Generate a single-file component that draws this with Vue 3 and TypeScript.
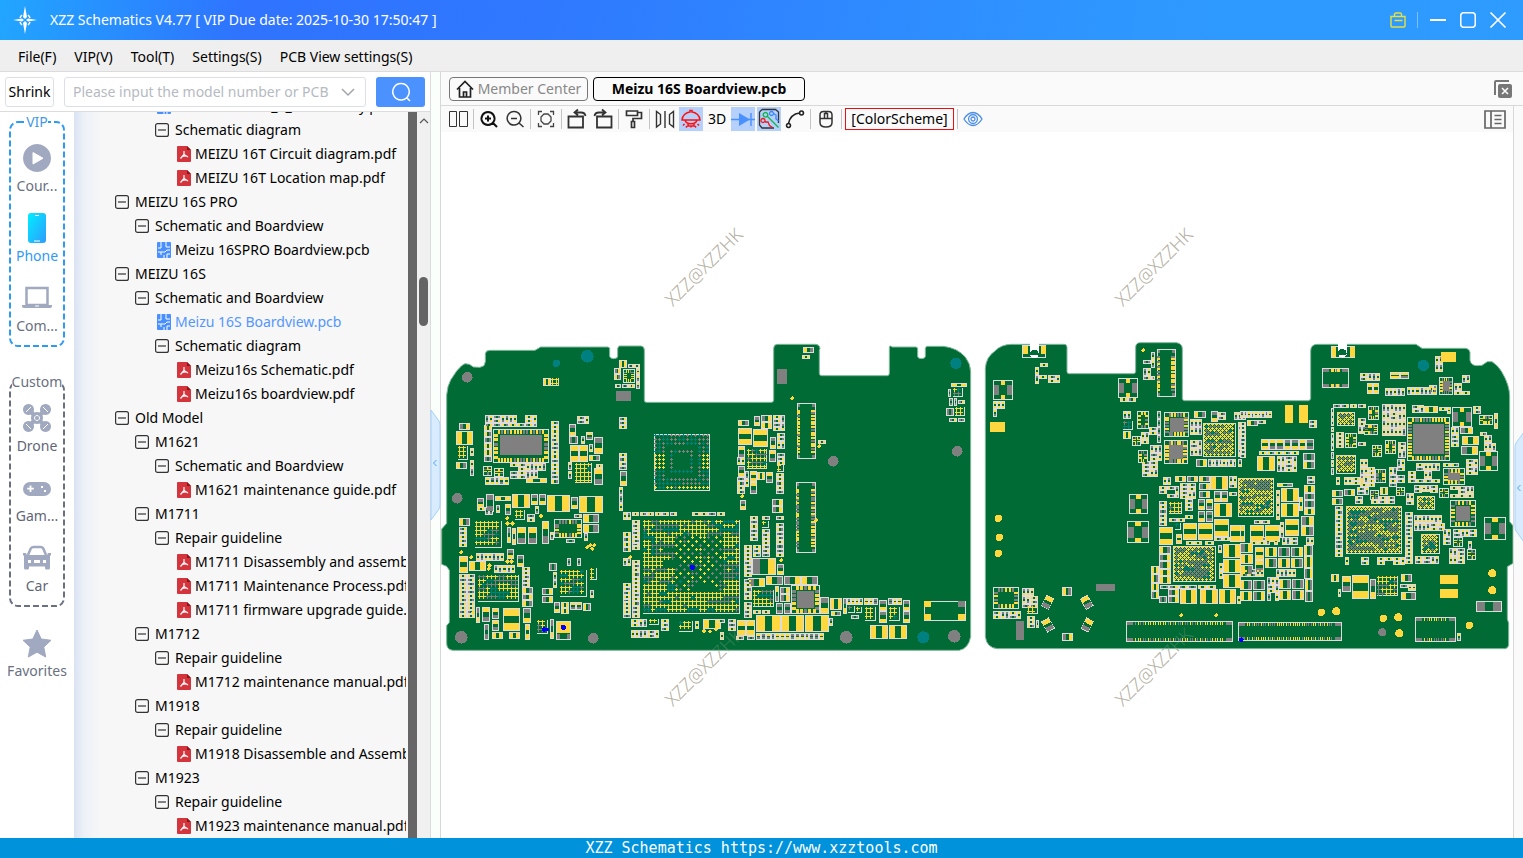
<script setup lang="ts">
import { ref } from 'vue'

interface Stroke { d: string; s?: string; f?: string; w?: number }
interface TreeRow { level: number; kind: 'folder' | 'pdf' | 'pcb'; label: string; active?: boolean }
interface RailItem { icon: string; label: string; active?: boolean }

const query = ref('')
const menus = ['File(F)', 'VIP(V)', 'Tool(T)', 'Settings(S)', 'PCB View settings(S)']

const vipItems: RailItem[] = [
  { icon: 'course', label: 'Cour...' },
  { icon: 'phone', label: 'Phone', active: true },
  { icon: 'computer', label: 'Com...' },
]
const customItems: RailItem[] = [
  { icon: 'drone', label: 'Drone' },
  { icon: 'game', label: 'Gam...' },
  { icon: 'car', label: 'Car' },
]

const G = '#a0a9bf'
const W = '#ffffff'
const railIcons: Record<string, Stroke[]> = {
  course: [
    { d: 'M14 0a14 14 0 1 0 .01 0z', f: G },
    { d: 'M10 8.500v11.500l10-5.750z', f: W, s: W, w: 1 },
  ],
  phone: [
    { d: 'M8-1h12q3 0 3 3v24q0 3-3 3h-12q-3 0-3-3v-24q0-3 3-3z', f: 'url(#phoneFill)' },
    { d: 'M12 1.500h4M11 27h6', s: W, w: 1 },
  ],
  computer: [
    { d: 'M3.500 4h21v17h-21z', s: G, w: 2.5 },
    { d: 'M-1 21h30v1q0 2-2 2h-26q-2 0-2-2z', f: G },
    { d: 'M12 22h4', s: W, w: 1 },
  ],
  drone: [
    { d: 'M6 6l16 16M22 6l-16 16', s: G, w: 4 },
    { d: 'M14 8a6 6 0 1 0 .01 0z', f: G },
    { d: 'M5.500 0a5.500 5.500 0 1 0 .01 0zM22.500 0a5.500 5.500 0 1 0 .01 0zM5.500 17a5.500 5.500 0 1 0 .01 0zM22.500 17a5.500 5.500 0 1 0 .01 0z', f: G },
    { d: 'M3 8l5-5M25 8l-5-5M3 20l5 5M25 20l-5 5', s: W, w: 1 },
    { d: 'M14 11.500a2.500 2.500 0 1 0 .01 0z', s: W, w: 1 },
  ],
  game: [
    { d: 'M7 8h14a7 7 0 0 1 0 14h-14a7 7 0 0 1 0-14z', f: G },
    { d: 'M7.500 11.500v6.500M4.200 14.700h6.600', s: W, w: 1.8 },
    { d: 'M18 12h2v2h-2zM21 16h2v2h-2z', f: W },
  ],
  car: [
    { d: 'M5 11l2.500-6q.8-2 3-2h7q2.200 0 3 2l2.500 6', s: G, w: 2.5 },
    { d: 'M0 9h3l1 2h20l1-2h3v2l-1 1v12q0 1.500-1.500 1.500h-2q-1.500 0-1.500-1.500v-1.500h-16v1.500q0 1.500-1.500 1.500h-2q-1.500 0-1.500-1.500v-12l-1-1z', f: G },
    { d: 'M5 16h3v3h-3zM20 16h3v3h-3zM11 16h6v3h-6z', f: W },
  ],
  star: [
    { d: 'M14 0l4.200 9 9.800 1.300-7.200 6.800 1.900 9.900-8.700-4.800-8.700 4.800 1.900-9.900-7.200-6.800 9.800-1.300z', f: G, s: G, w: 1 },
  ],
}

const K = '#333333'
interface Tool { kind: 'icon' | 'sep' | 'text' | 'scheme'; name?: string; label?: string; on?: boolean; art?: Stroke[] }
const sep: Tool = { kind: 'sep' }
const tools: Tool[] = [
  { kind: 'icon', name: 'Split view', art: [{ d: 'M3.500 4.500h7v15h-7zM13.500 4.500h8v15h-8z', s: K, w: 1 }] },
  sep,
  { kind: 'icon', name: 'Zoom in', art: [{ d: 'M11 5a6.500 6.500 0 1 0 .01 0zM16 16l4 4M11 8.500v6M8 11.500h6', s: '#111', w: 2 }] },
  { kind: 'icon', name: 'Zoom out', art: [{ d: 'M11 4.500a6.800 6.800 0 1 0 .01 0zM16 16l4.500 4M8 11.500h6', s: K, w: 1.5 }] },
  sep,
  { kind: 'icon', name: 'Fit', art: [{ d: 'M4.500 8v-3.500h3.500M16 4.500h3.500v3.500M19.500 16v3.500h-3.500M8 19.500h-3.500v-3.500M10 7h4l3 3v4l-3 3h-4l-3-3v-4z', s: '#444', w: 1.3 }] },
  sep,
  { kind: 'icon', name: 'Rotate left', art: [{ d: 'M3.500 9.500h14.500v11h-14.500zM10 5.500h6q4 0 4.500 3.500M13 2.500l-3.500 3 3.500 2.800', s: K, w: 1.8 }] },
  { kind: 'icon', name: 'Rotate right', art: [{ d: 'M6 9.500h14.500v11h-14.500zM3.500 9q.5-3.500 4.500-3.500h6M11 2.500l3.500 3-3.500 2.800', s: K, w: 1.8 }] },
  sep,
  { kind: 'icon', name: 'Paint', art: [{ d: 'M4.500 4h11v4.500h-11zM15.500 5.500h4v6h-8.500v3M9.500 14.500h3v6h-3z', s: K, w: 1.7 }] },
  sep,
  { kind: 'icon', name: 'Mirror', art: [{ d: 'M3.500 4.500v15.500l4-3v-9.500zM20.500 4.500v15.500l-4-3v-9.500zM12 4v17', s: K, w: 1.4 }] },
  { kind: 'icon', name: 'Light', on: true, art: [{ d: 'M3 13q0-3 2.500-5.500 2.500-2.300 5.500-2.500v-1.500h2v1.500q3 .2 5.500 2.500 2.500 2.500 2.500 5.500zM6 13q1 3.800 6 3.800t6-3.800M9 17v2h6v-2M5.500 17l-1.500 1.500M18.500 17l1.500 1.500M8 19l-1 1.500M16 19l1 1.500M12 19v1.500', s: '#ff1010', w: 1.5 }] },
  { kind: 'text', label: '3D' },
  { kind: 'icon', name: 'Diode', on: true, art: [{ d: 'M8 6l11 6.500-11 6.500z', f: '#4a90ff' }, { d: 'M0 12.500h24M20 6v13', s: '#4a90ff', w: 1.4 }] },
  { kind: 'icon', name: 'Traces', on: true, art: [
    { d: 'M5 2.500h13.500l3 2.500v11M2.500 5v13l2.500 3h12M2.500 5l2.500-2.500', s: K, w: 1.3 },
    { d: 'M8.500 5.500a2.300 2.300 0 1 0 .01 0zM10.500 9.500l11 11', s: '#13b54a', w: 1.4 },
    { d: 'M6 11.500a2 2 0 1 0 .01 0zM8 15h3l1.500 3.500 3 2', s: '#f01818', w: 1.3 },
    { d: 'M14.500 4.500a2 2 0 1 0 .01 0zM16.500 6.500l2.500 1.500v4l2.500 2', s: '#3b86ff', w: 1.3 },
  ] },
  { kind: 'icon', name: 'Curve', art: [{ d: 'M18.500 4a2 2 0 1 0 .01 0zM16.500 6q-9 1-11 10.500M5.500 16.500a2 2 0 1 0 .01 0z', s: '#222', w: 1.6 }] },
  sep,
  { kind: 'icon', name: 'Mouse', art: [{ d: 'M9.500 4.500h5q3.500 0 3.500 3.500v7.500q0 4.500-6 4.500t-6-4.500v-7.500q0-3.500 3.500-3.500zM6 11.500h12M12 4.500v2M10.500 6.500h3v5h-3z', s: K, w: 1.5 }] },
  sep,
  { kind: 'scheme', label: '[ColorScheme]' },
  sep,
  { kind: 'icon', name: 'Visibility', art: [{ d: 'M3 12q4-6.500 9-6.500t9 6.500q-4 6.500-9 6.500t-9-6.500zM12 7.500a4.500 4.500 0 1 0 .01 0zM12 10a2 2 0 1 0 .01 0z', s: '#4a8ee6', w: 1.3 }] },
]

const tree: TreeRow[] = [
  { level: 2, kind: 'pcb', label: 'MEIZU 16T MB_1_2 Assembly.pcb' },
  { level: 2, kind: 'folder', label: 'Schematic diagram' },
  { level: 3, kind: 'pdf', label: 'MEIZU 16T Circuit diagram.pdf' },
  { level: 3, kind: 'pdf', label: 'MEIZU 16T Location map.pdf' },
  { level: 0, kind: 'folder', label: 'MEIZU 16S PRO' },
  { level: 1, kind: 'folder', label: 'Schematic and Boardview' },
  { level: 2, kind: 'pcb', label: 'Meizu 16SPRO Boardview.pcb' },
  { level: 0, kind: 'folder', label: 'MEIZU 16S' },
  { level: 1, kind: 'folder', label: 'Schematic and Boardview' },
  { level: 2, kind: 'pcb', label: 'Meizu 16S Boardview.pcb', active: true },
  { level: 2, kind: 'folder', label: 'Schematic diagram' },
  { level: 3, kind: 'pdf', label: 'Meizu16s Schematic.pdf' },
  { level: 3, kind: 'pdf', label: 'Meizu16s boardview.pdf' },
  { level: 0, kind: 'folder', label: 'Old Model' },
  { level: 1, kind: 'folder', label: 'M1621' },
  { level: 2, kind: 'folder', label: 'Schematic and Boardview' },
  { level: 3, kind: 'pdf', label: 'M1621 maintenance guide.pdf' },
  { level: 1, kind: 'folder', label: 'M1711' },
  { level: 2, kind: 'folder', label: 'Repair guideline' },
  { level: 3, kind: 'pdf', label: 'M1711 Disassembly and assembly.pdf' },
  { level: 3, kind: 'pdf', label: 'M1711 Maintenance Process.pdf' },
  { level: 3, kind: 'pdf', label: 'M1711 firmware upgrade guide.pdf' },
  { level: 1, kind: 'folder', label: 'M1712' },
  { level: 2, kind: 'folder', label: 'Repair guideline' },
  { level: 3, kind: 'pdf', label: 'M1712 maintenance manual.pdf' },
  { level: 1, kind: 'folder', label: 'M1918' },
  { level: 2, kind: 'folder', label: 'Repair guideline' },
  { level: 3, kind: 'pdf', label: 'M1918 Disassemble and Assemble.pdf' },
  { level: 1, kind: 'folder', label: 'M1923' },
  { level: 2, kind: 'folder', label: 'Repair guideline' },
  { level: 3, kind: 'pdf', label: 'M1923 maintenance manual.pdf' },
]

/*
 * Part lists, one per board section, in board units.
 * c chip, s strip of chips, k packed block, b ball grid, t tight ball grid,
 * q quad package, j side connector, i edge connector, m shielded module,
 * f flat pad, o round pad, p test point, w outline, r tilted chip
 */
const leftWest = `
o 82 127 16 g;o 349 85 11 t;o 442 64 19 t;o 52 490 16 g;o 64 907 19 g;o 460 910 16 g
c 309 129 24 24;b 333 129 24 24;q 549 102 36 42 3 4;c 537 75 24 24;s 563 87 37 12 2;s 522 98 22 36 2;s 588 99 12 63 3;s 525 147 60 12 3
f 528 168 45 30 g;k 135 240 156 36;q 159 282 168 102 15 6;f 180 300 126 60 g;s 333 258 24 188 15;s 132 270 24 110 6
k 210 384 110 48;q 130 393 27 30 2 2;q 163 399 28 27 2 2;s 135 426 72 24 5;c 258 429 63 15 yy
c 57 264 33 21 gy;c 48 288 51 42 yy;b 54 333 30 42;c 90 339 12 24;c 48 381 33 21 yg;s 90 375 12 48 2
k 387 243 80 24;c 387 267 21 36 gy;c 387 303 27 24;c 423 303 12 24;c 438 291 21 24;c 462 306 27 51 gy;c 390 330 27 51 yy;c 417 330 27 51 yy
c 447 327 12 24;c 447 360 33 18 yg;b 405 384 51 60;c 462 399 27 51 yg;s 384 381 12 51 2;c 468 387 21 12
s 537 246 24 36 3;s 537 354 24 51 4;c 540 408 21 45 gy;s 537 456 12 72 3
b 642 297 168 171 x;s 576 531 135 12 6;s 756 531 54 12 2
c 111 489 21 30 gy;c 138 477 24 54 gg;c 165 483 48 15 yy;c 216 477 54 42 yy;c 273 477 21 33 gy;c 297 477 21 33 gy;c 321 480 69 51 yy;c 393 486 21 36 gy;c 417 483 72 51 yy
k 111 516 48 30;c 168 510 12 24;c 195 507 18 33 yg;b 225 525 30 30;k 261 513 36 48
c 57 549 33 24 yg;s 57 576 24 60 5;b 105 558 81 81;c 201 576 12 48;c 216 579 12 51;c 231 576 27 51 yg;c 264 576 27 51 yg;c 306 558 21 69 yg;q 342 552 84 57 6 4
c 429 537 48 27 yg;c 429 567 48 27 yg;c 402 537 24 12;c 378 612 27 12;c 330 591 12 24;c 432 593 12 24
p 64 652;p 94 667;p 148 692;p 202 550;p 202 680;p 202 566;p 217 566;p 214 680;p 442 637;p 451 631;p 457 642;p 463 631;p 303 544;p 146 702;p 100 832;p 571 667
s 108 654 84 24 7;c 57 663 27 51 yy;c 87 678 51 30 yy;c 201 642 21 30;s 162 690 63 24 5;c 231 660 21 36
s 57 717 24 132 11;s 81 717 24 132 11;b 114 720 123 81;s 246 696 24 60 5;s 246 756 33 60 3
c 327 684 24 24;c 381 669 12 24;c 411 669 12 24;b 360 705 81 81;s 339 711 12 48 2;c 306 759 33 21 gy;c 306 783 33 21 gy;b 450 699 22 36;k 450 738 24 24;c 450 765 12 24
c 342 801 18 33 gy;s 363 801 24 36 2;s 390 801 36 24 2;c 429 804 24 24
c 108 816 12 48;c 126 816 24 45 yg;c 156 819 21 33 yg;c 189 819 51 69 yy;c 249 819 24 45 gy;c 156 855 21 33 yg;c 132 867 15 48 gg;c 156 891 33 21 yy;c 207 891 33 21 yy;c 255 867 15 48 yy
b 291 855 33 42;c 330 852 12 60;w 348 858 45 57;f 351 861 39 33 y;f 351 897 9 15 g;f 381 897 9 15 g;o 370 877 8 b;o 312 884 7 b;o 321 884 6 b;o 757 697 8 b
s 549 531 24 24 2;s 576 555 24 90 8;s 549 590 24 60 4;s 549 669 24 24 2;s 576 675 24 174 14;s 549 744 24 105 9;b 609 555 291 282 d
k 573 852 51 24;k 573 885 90 24;b 627 852 30 18;s 663 852 24 36 3;b 717 858 42 33;c 765 858 12 24;c 789 852 54 30 yy;p 792 888;p 810 890;p 828 884`

const leftEast = `
c 309 36 33 18 yg;c 306 60 24 12;f 231 102 30 45 g;p 277 190;j 291 204 57 168 16;j 288 441 60 213 22;c 354 315 24 12;p 358 334
o 400 379 16 g;o 772 349 16 g;o 768 85 17 t;p 127 484;p 349 556;p 244 676;o 439 907 19 g;o 670 907 18 t;o 763 904 19 g
c 114 255 33 18 yg;c 162 243 18 30 gy;c 183 240 33 21 gy;c 183 261 33 21 yy;k 219 240 36 54;c 114 279 42 51 yy;c 159 282 45 54 yy;c 210 306 18 36 gy;k 231 294 24 54;c 114 333 21 36 yg;b 141 342 60 60;c 207 345 21 36 yg;s 231 354 24 36 3
k 111 366 24 24;c 114 393 21 33;s 111 426 24 51 4;s 135 408 12 48 2;c 150 408 21 33 yy;c 150 441 21 36 yg;c 171 411 24 24;c 198 411 21 33 yg;b 231 387 21 24;s 228 414 24 63 5;c 120 495 18 30 gy;c 216 492 33 21 gy;c 216 513 33 21 gy
s 0 531 75 12 3;c 186 543 24 12;c 228 543 24 12;s 150 543 24 75 6;b 186 558 21 21;s 186 582 24 84 7;s 228 564 24 102 8;s 132 630 24 96 8;k 159 630 24 36;c 156 669 72 51 gy;c 231 687 21 33 gy
c 144 729 51 27 gy;c 198 723 51 27 yg;c 252 723 51 27 gy;c 303 723 51 27 yg;s 132 732 24 63 5;b 159 765 63 51;c 225 753 12 48;c 240 756 30 21 gy;c 240 777 30 24 gy;q 273 750 87 87 5 5 c;c 360 786 27 51 gy;s 132 801 24 48 4;c 228 804 21 33 gg;c 252 804 21 33 gg;c 159 825 24 12;c 186 825 24 12
c 168 840 75 51 yy;c 243 840 69 51 yy;c 315 840 72 51 yy;c 111 855 27 48 yy;c 138 855 27 48 yy;c 387 849 12 24;s 168 894 204 21 14;k 60 891 48 24;c 108 903 24 12;c 141 903 24 12;k 84 852 24 36;c 51 852 24 12
c 390 789 36 36 yy;c 393 828 30 14;c 429 789 12 48;s 441 789 48 21 4;b 444 813 20 20;b 467 815 20 18;c 453 840 24 12;s 492 789 42 21 3;b 495 816 33 42;c 537 795 24 33 gy;c 537 828 24 36 gy;s 564 789 42 21 3;b 567 816 33 42;c 609 795 21 33 gy;c 609 828 21 36 gy;c 510 870 54 42 yy;c 567 870 54 42 yy
w 672 798 126 60;f 672 798 21 18 y;f 774 798 21 18 g;f 672 837 21 18 y;f 774 837 21 18 y
c 753 144 48 12 yy;c 744 162 9 24;b 759 160 30 26;c 747 189 12 24;c 762 189 9 24;c 774 195 21 12;c 738 219 24 24;b 765 216 30 27;c 747 249 24 12;c 774 249 21 12`

const rightWest = `
w 126 30 72 39;f 130 33 14 24 y;f 183 33 14 24 y;f 150 24 27 36 w;o 163 57 13 w
m 39 135 60 60;m 414 129 60 60;m 447 477 57 60;m 441 558 66 66
c 165 96 12 24;c 180 84 24 12;c 165 120 12 27;c 177 120 24 12;k 204 120 36 24;k 39 197 36 24;c 39 221 12 24;f 30 261 45 30 y;s 420 187 48 14 2
p 490 46;k 489 50 36 84;j 531 42 57 144 14;o 55 550 11 y;o 58 607 11 y;o 55 655 11 y;f 108 857 24 58 g;f 348 747 57 21 g
q 39 756 78 66 5 4;s 126 759 36 24 3;k 126 783 48 36;b 141 812 33 24;s 141 843 24 36 3;c 168 855 9 24;k 40 827 86 27;c 246 756 30 27 yg;c 246 893 33 24 gy
r 203 802 118;r 320 802 60;r 204 870 60;r 322 870 118
k 429 228 30 24;b 429 258 30 27;c 429 288 24 24;q 471 228 36 54 2 3;k 507 228 39 96;q 552 231 75 75 6 6 c;q 552 315 72 72 6 6 c;q 456 303 27 30 2 2;k 483 291 26 40;q 474 345 30 39 2 2;k 510 330 36 48;k 486 378 54 54
c 642 228 36 21 yg;c 693 228 21 33 gy;k 714 231 96 24;t 669 264 99 102 y;s 774 261 24 105 9;s 684 372 84 24 8;c 648 372 33 24 gy;k 630 252 38 54;k 630 315 38 54;c 774 372 12 24
k 549 425 30 24;c 585 423 33 18 yy;c 621 423 33 18 gy;c 657 423 33 18 yg;c 690 423 54 42 yy;k 747 423 24 66;k 537 453 60 39;k 600 444 50 48;c 657 444 33 21 gy;c 657 468 33 21 gy;c 702 468 21 33 gy;c 723 468 21 33 gy;t 774 429 108 117
s 537 498 24 75 6;b 567 501 39 36;k 615 492 24 66;c 654 492 21 33 gy;c 678 492 21 33 yg;c 654 528 21 33 gy;c 678 528 21 33 gg;c 702 504 54 42 yy;c 537 576 42 54 yy v;c 609 564 42 51 yy v;c 654 564 45 51 yy v;c 702 552 45 54 yy v;c 750 570 45 51 yy v;s 567 549 48 12 2;b 585 564 18 20;c 588 597 18 30;s 618 618 48 12 2;c 675 618 27 12;s 702 606 48 12 2
s 537 633 36 114 5;t 579 633 129 108;s 513 693 24 99 4;c 537 783 24 21;c 729 627 54 42 yy;c 729 672 54 42 yy;c 729 717 54 42 yy;c 714 630 12 24;s 717 684 12 48 2;s 540 750 170 12 6;c 564 762 33 21 gy;c 564 783 33 21 gy;c 600 762 51 45 yy;c 660 762 54 45 yy;c 717 762 51 45 yy;c 771 783 12 24
p 604 841;p 709 841;i 438 858 321 63 36;i 774 861 311 57 38;o 784 914 7 b`

const rightEast = `
w 273 33 72 36;f 275 35 13 30 y;f 331 35 13 30 y;f 294 24 27 36 w;o 307 55 13 w;i 246 99 81 60 8;o 550 91 17 t;f 603 51 45 30 y;s 450 111 57 21 2
k 585 63 24 48;k 567 126 24 48;q 597 126 42 54 4 4 c;k 642 120 50 62;k 360 114 60 28;c 381 144 18 33 yy;c 399 144 18 33 yy;s 435 160 60 24 5;s 500 157 90 24 7
f 135 210 24 54 y;f 177 210 27 54 y;k 207 207 30 72;s 0 228 96 22 9;c 21 255 33 18 yg;c 54 255 24 12;s 0 262 18 106 9;s 63 312 159 33 7;k 57 348 120 18;c 51 363 54 45 yy;k 111 363 66 50;s 189 354 36 48 2
k 201 423 24 24;c 111 444 48 12;s 192 450 33 90 4;c 123 459 54 42 yy;c 123 504 54 42 yy;c 177 486 12 42;s 108 465 12 90 3;s 183 543 39 60 2;c 135 552 42 51 yy v;c 30 570 42 51 yy;c 75 570 45 51 yy;c 0 570 15 51 y;k 42 555 50 12;s 120 560 12 50 2
k 30 606 190 24;k 0 624 42 102 42 33;c 45 636 27 39 yy;c 45 675 27 39 yg;k 75 636 117 66 39 33;s 192 630 27 102 3;k 0 702 70 24;k 84 702 108 24;k 0 735 78 66 39 33;k 81 726 36 75;k 117 732 78 66 39 33;s 195 732 24 69 2
s 273 219 10 130 7;s 279 207 99 12 4;t 291 231 54 42 y;k 288 291 24 50;q 315 294 36 45 3 3;t 288 360 60 57 y;s 273 350 10 72 3;q 384 213 33 42 3 3;q 372 267 42 33 3 3;k 426 207 75 96;k 354 250 24 84;q 396 330 30 36 3 3;q 435 315 33 42 3 3;k 474 320 24 50;k 360 372 45 84;k 446 372 56 84;q 405 402 33 42 3 3
q 501 246 129 132 12 12 c;k 515 210 36 27;c 552 213 42 21 yy;k 598 216 36 21;m 636 216 60 60;m 717 348 57 60;m 732 546 66 69;k 700 213 24 24;q 717 240 42 30 3 2;c 762 234 12 48;c 720 291 21 12;k 732 300 48 48
c 660 276 39 21 gy;c 666 303 51 27 yy;c 663 333 51 27 gy;k 633 276 26 75;k 678 372 36 57;q 609 399 66 51 4 3 c;k 505 384 100 60;s 610 384 48 12 2
c 276 465 33 21 yg;c 276 489 33 21 yg;c 312 462 33 21 gy;k 288 426 82 24;k 346 484 125 24;k 350 456 36 24;c 420 456 24 24;q 390 465 27 30 2 2;q 468 456 27 27 2 2;k 498 474 24 50;t 531 483 54 42 y;k 522 450 76 22;q 597 459 30 30 2 2;q 630 495 78 81 5 5 c;k 630 453 78 36;t 318 513 168 144;s 285 513 24 153 12;s 495 531 24 156 13
k 315 666 180 24;k 522 540 92 56;t 543 597 57 60 y;k 608 582 30 54;k 640 582 70 24;q 640 606 30 30 2 2;q 682 642 26 32 2 2;k 628 640 50 48;k 525 664 100 24;c 684 618 12 24
c 273 717 24 24;c 306 723 27 48 yg;c 336 720 51 72 yy;c 390 732 18 60 gy;b 411 723 63 60;c 483 717 33 24 yg;k 480 747 54 20;c 483 771 45 24 yg;f 600 720 54 27 y;f 600 762 54 27 y
o 757 715 12 y;o 757 766 12 y;o 244 832 11 y;o 289 829 12 y;o 430 850 11 y;o 475 847 12 y;o 478 895 12 y;o 688 871 11 y;o 427 892 12 g;c 708 798 78 33 gg;i 525 846 123 75 10;c 651 894 12 24;c 294 762 9 24`

type Ink = 'line' | 'base' | 'y' | 'g' | 't' | 'b' | 'w'
const inks: [Ink, string][] = [
  ['line', '#dcdcdc'], ['base', '#006b35'], ['g', '#808080'], ['t', '#008080'],
  ['y', '#ffd83f'], ['b', '#0000ff'], ['w', '#ffffff'],
]

function drawSection(source: string) {
  const out: Record<Ink, string> = { line: '', base: '', y: '', g: '', t: '', b: '', w: '' }
  let seed = 11
  const rnd = () => {
    seed = (seed * 16807) % 2147483647
    return seed / 2147483647
  }
  const snap = (v: number) => Math.round(v / 3) * 3
  const rect = (ink: Ink, x: number, y: number, w: number, h: number) => {
    const l = snap(x)
    const t = snap(y)
    const rw = Math.max(3, snap(x + w) - l)
    const rh = Math.max(3, snap(y + h) - t)
    out[ink] += `M${l} ${t}h${rw}v${rh}h${-rw}z`
  }
  const box = (x: number, y: number, w: number, h: number) => {
    const l = snap(x)
    const t = snap(y)
    const r = snap(x + w)
    const b = snap(y + h)
    rect('line', l, t, r - l, b - t)
    if (r - l > 6 && b - t > 6) rect('base', l + 3, t + 3, r - l - 6, b - t - 6)
  }
  const pick = (): Ink => (rnd() < 0.62 ? 'y' : 'g')
  const chip = (x0: number, y0: number, w0: number, h0: number, pads?: string, dir?: string) => {
    const x = snap(x0)
    const y = snap(y0)
    const w = Math.max(9, snap(x0 + w0) - x)
    const h = Math.max(9, snap(y0 + h0) - y)
    const a = (pads ? pads[0] : pick()) as Ink
    const b = (pads ? pads[1] || pads[0] : pick()) as Ink
    box(x, y, w, h)
    if (dir === 'v' || (h > w && dir !== 'h')) {
      const p = Math.max(3, snap((h - 6) * 0.34))
      rect(a, x + 3, y + 3, w - 6, p)
      rect(b, x + 3, y + h - 3 - p, w - 6, p)
    } else {
      const p = Math.max(3, snap((w - 6) * 0.34))
      rect(a, x + 3, y + 3, p, h - 6)
      rect(b, x + w - 3 - p, y + 3, p, h - 6)
    }
  }
  const plus = (ink: Ink, x: number, y: number, arm = 9) => {
    rect(ink, x, y + 3, arm, 3)
    rect(ink, x + 3, y, 3, arm)
  }
  const disc = (ink: Ink, x: number, y: number, r: number) => {
    out[ink] += `M${x - r} ${y}a${r} ${r} 0 1 0 ${2 * r} 0a${r} ${r} 0 1 0 ${-2 * r} 0z`
  }
  const pads = (x: number, y: number, len: number, n: number, size: number, horizontal: boolean) => {
    const step = len / n
    for (let i = 0; i < n; i++) {
      const at = i * step + step * 0.2
      const span = Math.max(3, snap(step * 0.6))
      if (horizontal) rect(pick(), snap(x + at), y, span, size)
      else rect(pick(), x, snap(y + at), size, span)
    }
  }

  for (const item of source.split(/[;\n]/)) {
    if (!item.trim()) continue
    const a = item.trim().split(' ')
    const [x, y, w, h, n, m] = a.slice(1).map(Number)
    switch (a[0]) {
      case 'c':
        chip(x, y, w, h, a[5], a[6])
        break
      case 's':
        for (let i = 0; i < n; i++) {
          if (h > w) {
            if (w > 12) chip(x, y + (i * h) / n, w, h / n, undefined, 'h')
            else chip(x, y + (i * h) / n, w, h / n - 1, undefined, 'v')
          } else if (h > 14) chip(x + (i * w) / n, y, w / n, h, undefined, 'v')
          else chip(x + (i * w) / n, y, w / n - 1, h, undefined, 'h')
        }
        break
      case 'k':
        if (n) {
          for (let v = 0; v + m <= h + 3; v += m) for (let u = 0; u + n <= w + 3; u += n) chip(x + u, y + v, n - 3, m - 3, undefined, 'h')
          break
        }
        for (let v = 0; v + 10 <= h; v += 24) {
          for (let u = 0; u + 10 <= w; u += 24) {
            if (rnd() < 0.1) continue
            const bw = Math.min(24, w - u)
            const bh = Math.min(24, h - v)
            if (bh < 20 || (bw >= 20 && rnd() < 0.5)) {
              chip(x + u, y + v, bw, 12, undefined, 'h')
              if (bh >= 22 && rnd() < 0.85) chip(x + u, y + v + 12, bw, 12, undefined, 'h')
            } else {
              chip(x + u, y + v, 12, bh, undefined, 'v')
              if (bw >= 22 && rnd() < 0.85) chip(x + u + 12, y + v, 12, bh, undefined, 'v')
            }
          }
        }
        break
      case 'b': {
        const sparse = a[5] === 'x'
        const big = a[5] === 'd'
        rect('line', x, y + h - 3, w, 3)
        rect('line', x + w - 3, y, 3, h)
        if (sparse) {
          rect('line', x, y, w, 3)
          rect('line', x, y, 3, h)
        }
        let ink: Ink = 'y'
        for (let v = 0; v + 10 < h; v += 12) {
          for (let u = 0; u + 10 < w; u += 12) {
            const fx = u / w
            const fy = v / h
            let inner = false
            if (sparse) {
              const ring = Math.max(Math.abs(fx - 0.46), Math.abs(fy - 0.46))
              if ((ring > 0.2 && ring < 0.26) || ring < 0.13) continue
              const side = fy > 0.35 && fy < 0.62 && (fx < 0.2 || fx > 0.8)
              ink = side || (fy > 0.85 && rnd() < 0.6) ? 'y' : rnd() < 0.5 ? 't' : 'g'
            } else if (big) {
              if (fx > 0.2 && fx < 0.36 && ((fy > 0.27 && fy < 0.33) || (fy > 0.42 && fy < 0.5))) continue
              if (fx > 0.5 && fx < 0.72 && fy > 0.68 && fy < 0.76) continue
              inner = fx > 0.3 && fx < 0.82 && fy > 0.14 && fy < 0.74
              if (inner && (u / 12 + v / 12) % 2 && rnd() < 0.8) continue
              if (inner || rnd() < 0.5) {
                const r = rnd()
                const teal = fx > 0.82 && fy < 0.6 ? 0.35 : inner ? 0.02 : 0.14
                ink = r < teal ? 't' : r < teal + (inner ? 0.4 : 0.2) ? 'g' : 'y'
              }
            } else if (rnd() < 0.6) {
              const r = rnd()
              ink = r < 0.56 ? 'y' : r < 0.76 ? 'g' : 't'
            }
            plus(ink, x + u, y + v, sparse || inner ? 9 : 12)
          }
        }
        break
      }
      case 't': {
        box(x, y, w, h)
        const bright = a[5] === 'y'
        let ink: Ink = 'g'
        for (let v = 0, row = 0; v + 10 < h; v += 6, row++) {
          for (let u = row % 2 ? 6 : 0; u + 10 < w; u += 12) {
            const edge = v < 6 || v + 16 > h || u < 6 || u + 16 > w
            if (rnd() < 0.5) {
              const r = rnd()
              ink = r < (bright ? 0.5 : 0.34) ? 'y' : r < 0.84 ? 'g' : 't'
            }
            plus(edge ? 'y' : ink, x + u, y + v)
          }
        }
        break
      }
      case 'q': {
        box(x, y, w, h)
        const d = w > 60 ? 12 : 9
        pads(x + d, y + 3, w - 2 * d, n, d, true)
        pads(x + d, y + h - 3 - d, w - 2 * d, n, d, true)
        pads(x + 3, y + d, h - 2 * d, m, d, false)
        pads(x + w - 3 - d, y + d, h - 2 * d, m, d, false)
        if (a[7] === 'c') {
          const k = w > 100 ? 0.15 : 0.22
          rect('g', x + w * k, y + h * k, w * (1 - 2 * k), h * (1 - 2 * k))
        }
        break
      }
      case 'j':
        box(x, y, w, h)
        rect('g', x + 3, y + 3, 6, 10)
        rect('g', x + w - 11, y + 3, 8, 10)
        rect('g', x + 3, y + h - 13, 6, 10)
        rect('g', x + w - 11, y + h - 13, 8, 10)
        pads(x, y + 18, h - 36, n, 10, false)
        pads(x + w - 14, y + 18, h - 36, n, 12, false)
        break
      case 'i':
        box(x, y, w, h)
        for (const v of [y + 2, y + h - 13]) {
          rect('g', x + 3, v, 18, 11)
          rect('g', x + w - 21, v, 18, 11)
          pads(x + 26, v, w - 52, n, 11, true)
        }
        break
      case 'm':
        box(x, y, w, h)
        rect('g', x + 2, y + h / 4, w * 0.28, h / 2)
        rect('g', x + w * 0.72 - 2, y + h / 4, w * 0.28, h / 2)
        rect('y', x + w * 0.38, y + 2, w * 0.24, h * 0.2)
        rect('y', x + w * 0.38, y + h * 0.8 - 2, w * 0.24, h * 0.2)
        break
      case 'f':
        rect(a[5] as Ink, x, y, w, h)
        break
      case 'o':
        disc(a[4] as Ink, x, y, w)
        break
      case 'p':
        out.y += `M${x - 7} ${y}l7-7 7 7-7 7z`
        break
      case 'w':
        box(x, y, w, h)
        break
      case 'r': {
        const t = (w * Math.PI) / 180
        const quad = (ink: Ink, l: number, r: number, k: number) => {
          const pts = [[l, -k], [r, -k], [r, k], [l, k]].map(([u, v]) => `${Math.round(x + u * Math.cos(t) - v * Math.sin(t))} ${Math.round(y + u * Math.sin(t) + v * Math.cos(t))}`)
          out[ink] += `M${pts.join('L')}z`
        }
        quad('line', -19, 19, 13)
        quad('base', -4, 4, 11)
        quad('y', -17, -4, 11)
        quad('g', 4, 17, 11)
        break
      }
    }
  }
  return inks.map(([ink, color]) => ({ color, d: out[ink] })).filter((layer) => layer.d)
}

const sections = [
  { x: 440, layers: drawSection(leftWest) },
  { x: 700, layers: drawSection(leftEast) },
  { x: 980, layers: drawSection(rightWest) },
  { x: 1240, layers: drawSection(rightEast) },
]

const boards = [
  { x: 440, d: 'M20 180L24 155 32 135 50 108 65 92 75 86 88 88 100 96 120 97 132 92 136 80V56Q138 46 150 46H285L302 36H505L509 40V64Q510 71 521 71Q533 71 533 64V40L537 33H603Q613 34 613 45V196Q613 202 619 202H994Q1001 202 1001 195V40Q1001 28 1013 28H1128Q1139 29 1140 40L1138 46V115Q1138 122 1145 122H1342Q1348 122 1348 115V35L1352 33 1356 36H1427Q1433 36 1433 42V64Q1433 71 1444 71Q1456 71 1456 64V40L1460 34H1510Q1550 38 1576 66Q1592 88 1592 110V905Q1586 940 1558 946H38Q20 944 20 925V872L28 862V706L20 694 5 688V582L20 565z' },
  { x: 980, d: 'M16 100Q18 66 45 48Q64 28 95 28H253Q261 28 261 37V110Q261 116 268 116H460Q467 116 467 109V37Q467 23 481 23H590Q607 26 607 42V190Q607 197 614 197H985Q992 196 992 190V48Q992 28 1012 28H1308L1326 40H1458Q1472 44 1470 60L1470 76Q1474 92 1490 92L1506 91 1522 80H1536Q1553 90 1565 110Q1589 150 1589 185V560L1599 572V685L1582 695V852L1586 865V930Q1584 941 1574 941H52Q20 938 16 905z' },
]
const marks = [[673, 307], [1123, 307], [673, 707], [1123, 707]]
</script>

<template>
  <div class="window">
    <header class="titlebar">
      <svg class="logo" width="24" height="28" viewBox="0 0 24 28" aria-hidden="true">
        <path d="M12 0l2 11-2 2-2-2zM12 28l2-11-2-2-2 2zM0 14l9-1.500 2 1.500-2 1.500zM24 14l-9-1.500-2 1.500 2 1.500z" fill="#fff" />
        <path d="M9 9a6 6 0 0 0-2 3M15 9a6 6 0 0 1 2 3M9 19a6 6 0 0 1-2-3M15 19a6 6 0 0 0 2-3" fill="none" stroke="#fff" stroke-width="1.5" />
      </svg>
      <h1>XZZ Schematics V4.77 [ VIP Due date: 2025-10-30 17:50:47 ]</h1>
      <div class="window-buttons">
        <button class="bag" aria-label="Toolbox">
          <svg width="16" height="16" viewBox="0 0 16 16"><path d="M1 4.500h14v9.500q0 1-1 1h-12q-1 0-1-1zM4.500 4.500v-2q0-1.500 1.500-1.500h4q1.500 0 1.500 1.500v2M4.500 8.500h8" fill="none" stroke="#e6e03c" stroke-width="1.4" /></svg>
        </button>
        <button aria-label="Minimize"><svg width="16" height="16" viewBox="0 0 16 16"><path d="M0 8h16" stroke="#fff" stroke-width="2" /></svg></button>
        <button aria-label="Maximize"><svg width="16" height="16" viewBox="0 0 16 16"><rect x=".75" y=".75" width="14.500" height="14.500" rx="3" fill="none" stroke="#fff" stroke-width="1.500" /></svg></button>
        <button aria-label="Close"><svg width="16" height="16" viewBox="0 0 16 16"><path d="M.5.5l15 15M15.500.5l-15 15" stroke="#fff" stroke-width="1.700" /></svg></button>
      </div>
    </header>

    <nav class="menubar">
      <button v-for="m in menus" :key="m">{{ m }}</button>
    </nav>

    <div class="workspace">
      <aside class="browser">
        <form class="search" @submit.prevent>
          <button type="button" class="shrink">Shrink</button>
          <label class="field">
            <input v-model="query" type="text" aria-label="Model number" placeholder="Please input the model number or PCB" />
            <svg width="14" height="8" viewBox="0 0 14 8" aria-hidden="true"><path d="M1 1l6 6 6-6" fill="none" stroke="#a0a4ac" stroke-width="1.500" /></svg>
          </label>
          <button type="submit" class="go" aria-label="Search">
            <svg width="20" height="20" viewBox="0 0 20 20"><path d="M10 1.500a8.200 8.200 0 1 0 .01 0zM15.500 15.500l3.500 3.500" fill="none" stroke="#fff" stroke-width="1.500" /></svg>
          </button>
        </form>

        <div class="browser-body">
          <div class="rail">
            <svg width="0" height="0" class="defs" aria-hidden="true">
              <defs><linearGradient id="phoneFill" x1="0" y1="0" x2="1" y2="1"><stop offset="0" stop-color="#00eeff" /><stop offset="1" stop-color="#2f9bff" /></linearGradient></defs>
            </svg>
            <section class="group vip">
              <svg class="dash" aria-hidden="true"><rect x="1" y="1" rx="8" /></svg>
              <h2>VIP</h2>
              <button v-for="it in vipItems" :key="it.label" :class="{ active: it.active }">
                <svg width="28" height="28" viewBox="0 0 28 28">
                  <path v-for="(p, i) in railIcons[it.icon]" :key="i" :d="p.d" :fill="p.f || 'none'" :stroke="p.s || 'none'" :stroke-width="p.w" />
                </svg>
                <span>{{ it.label }}</span>
              </button>
            </section>
            <section class="group custom">
              <svg class="dash" aria-hidden="true"><rect x="1" y="1" rx="8" /></svg>
              <h2>Custom</h2>
              <button v-for="it in customItems" :key="it.label">
                <svg width="28" height="28" viewBox="0 0 28 28">
                  <path v-for="(p, i) in railIcons[it.icon]" :key="i" :d="p.d" :fill="p.f || 'none'" :stroke="p.s || 'none'" :stroke-width="p.w" />
                </svg>
                <span>{{ it.label }}</span>
              </button>
            </section>
            <button class="favorites">
              <svg width="28" height="28" viewBox="0 0 28 28"><path v-for="(p, i) in railIcons.star" :key="i" :d="p.d" :fill="p.f" :stroke="p.s" stroke-linejoin="round" /></svg>
              <span>Favorites</span>
            </button>
          </div>

          <div class="tree">
            <ul>
              <li v-for="(row, i) in tree" :key="i">
                <button :class="['l' + row.level, row.kind, { active: row.active }]">
                  <svg v-if="row.kind === 'folder'" width="14" height="14" viewBox="0 0 14 14"><rect x=".6" y=".6" width="12.800" height="12.800" rx="2" fill="none" stroke="#333" stroke-width="1.200" /><path d="M3 7h8" stroke="#333" stroke-width="1.200" /></svg>
                  <svg v-else-if="row.kind === 'pdf'" width="14" height="16" viewBox="0 0 14 16"><path d="M1 0h9l4 4v11q0 1-1 1h-12q-1 0-1-1v-14q0-1 1-1z" fill="#d4353d" /><path d="M10 0l4 4h-4z" fill="#8e1219" /><path d="M7 5v3.500l-3.500 4M7 8.500l4 2.500M5 10.500l4-.5" fill="none" stroke="#fff" stroke-width="1.200" /></svg>
                  <svg v-else width="14" height="16" viewBox="0 0 14 16"><rect width="14" height="16" rx="1" fill="#4a8fff" /><path d="M4 0v6h-3M9 0v5h4M1 10h3v3M4 10h4l2-2h3M7 16v-3M10 16v-4h3" fill="none" stroke="#fff" stroke-width="1" /></svg>
                  <span>{{ row.label }}</span>
                </button>
              </li>
            </ul>
          </div>
          <div class="divider"></div>
          <div class="scroll">
            <svg width="10" height="6" viewBox="0 0 10 6" aria-hidden="true"><path d="M1 5l4-4 4 4" fill="none" stroke="#555" stroke-width="1.200" /></svg>
            <div class="thumb"></div>
          </div>
        </div>
      </aside>

      <div class="gutter">
        <button class="handle left" aria-label="Collapse file list"><svg width="10" height="110" viewBox="0 0 10 110"><path d="M0 0l8 11q1 2 1 5v78q0 3-1 5l-8 11z" fill="#d9ecff" stroke="#a5d2fb" /><path d="M5.500 50l-3 3 3 3" fill="none" stroke="#4ba6f5" /></svg></button>
      </div>

      <main class="viewer">
        <div class="tabs">
          <button class="tab">
            <svg width="18" height="18" viewBox="0 0 18 18" aria-hidden="true"><path d="M1 9.500l8-8 8 8M3.500 8v9h11v-9M7.500 17v-5h3v5" fill="none" stroke="#222" stroke-width="1.700" /></svg>
            <span>Member Center</span>
          </button>
          <button class="tab current">Meizu 16S Boardview.pcb</button>
          <button class="close-all" aria-label="Close all tabs">
            <svg width="18" height="18" viewBox="0 0 18 18"><path d="M1 15v-13q0-1 1-1h13" fill="none" stroke="#777" stroke-width="2" /><rect x="4" y="4" width="14" height="14" rx="2" fill="#777" /><path d="M8 8l6 6M14 8l-6 6" stroke="#fff" stroke-width="1.500" /></svg>
          </button>
        </div>

        <div class="view-row">
          <div class="view-main">
            <div class="toolbar">
              <template v-for="(t, i) in tools" :key="i">
                <i v-if="t.kind === 'sep'" class="sep"></i>
                <button v-else-if="t.kind === 'icon'" :class="{ on: t.on }" :aria-label="t.name">
                  <svg width="24" height="24" viewBox="0 0 24 24"><path v-for="(p, k) in t.art" :key="k" :d="p.d" :fill="p.f || 'none'" :stroke="p.s || 'none'" :stroke-width="p.w" /></svg>
                </button>
                <button v-else-if="t.kind === 'text'">{{ t.label }}</button>
                <button v-else class="scheme">{{ t.label }}</button>
              </template>
              <button class="panel-toggle" aria-label="Toggle side panel">
                <svg width="22" height="19" viewBox="0 0 22 19"><path d="M1 1h20v17h-20zM7 1v17" fill="none" stroke="#666" stroke-width="1.700" /><path d="M10.500 5.500h7M10.500 9.500h7M10.500 13.500h7" stroke="#666" stroke-width="1.400" /></svg>
              </button>
            </div>
            <svg class="canvas" viewBox="441 132 1072 706" role="img" aria-label="Board view">
              <text v-for="([x, y], i) in marks" :key="'a' + i" :transform="`translate(${x} ${y}) rotate(-45)`">XZZ@XZZHK</text>
              <g v-for="b in boards" :key="b.x" :transform="`translate(${b.x} 335) scale(.33333333)`">
                <path :d="b.d" fill="#006b35" stroke="#7fb89b" stroke-width="3" />
              </g>
              <g v-for="s in sections" :key="'s' + s.x" :transform="`translate(${s.x} 335) scale(.33333333)`" shape-rendering="crispEdges">
                <path v-for="layer in s.layers" :key="layer.color" :d="layer.d" :fill="layer.color" />
              </g>
              <text v-for="([x, y], i) in marks" :key="'b' + i" class="faint" :transform="`translate(${x} ${y}) rotate(-45)`">XZZ@XZZHK</text>
            </svg>
          </div>
          <div class="side">
            <button class="handle right" aria-label="Expand side panel"><svg width="10" height="110" viewBox="0 0 10 110"><path d="M10 0l-8 11q-1 2-1 5v78q0 3 1 5l8 11z" fill="#d9ecff" stroke="#a5d2fb" /><path d="M6.500 53l-3 3 3 3" fill="none" stroke="#4ba6f5" /></svg></button>
          </div>
        </div>
      </main>
    </div>

    <footer class="status">XZZ Schematics https://www.xzztools.com</footer>
  </div>
</template>

<style>
body { margin: 0; }
</style>

<style scoped>
* { box-sizing: border-box; }
.window { display: flex; flex-direction: column; height: 100vh; overflow: hidden; background: #fff; font: 14px/20px "Noto Sans", "Open Sans", sans-serif; color: #000; }
button { border: 0; padding: 0; margin: 0; background: none; font: inherit; color: inherit; cursor: pointer; }
svg { display: block; flex: none; overflow: visible; }

.titlebar { display: flex; align-items: center; height: 40px; flex: none; padding: 0 17px 0 13px; background: linear-gradient(100deg, #21a6ff 0, #2f73ff 16%, #2f78ff 35%, #2e98ff 75%, #2e9bff 100%); color: #fff; }
h1 { margin: 0 0 0 13px; font: inherit; }
.window-buttons { display: flex; gap: 14px; margin-left: auto; align-items: center; }
.bag { padding-right: 11px; margin-right: -2px; border-right: 1px solid #7cc0ff; }

.menubar { display: flex; align-items: center; gap: 18px; height: 32px; flex: none; padding: 2px 18px 0; background: #efefef; border-bottom: 1px solid #dcdcdc; }

.workspace { display: flex; flex: 1; min-height: 0; }
.browser { display: flex; flex-direction: column; width: 431px; flex: none; border-right: 1px solid #dcdcdc; }
.search { display: flex; align-items: center; gap: 10px; height: 40px; flex: none; padding: 0 5px; border-bottom: 1px solid #dcdcdc; }
.shrink { width: 49px; height: 30px; border: 1px solid #dcdfe6; border-radius: 3px; }
.field { display: flex; align-items: center; flex: 1; height: 30px; padding: 0 10px 0 8px; border: 1px solid #dcdfe6; border-radius: 3px; }
.field input { flex: 1; min-width: 0; border: 0; outline: 0; padding: 0; background: none; font: inherit; }
.field input::placeholder { color: #b6bac2; opacity: 1; }
.go { display: grid; place-items: center; width: 49px; height: 30px; border-radius: 3px; background: #4c92ff; }

.browser-body { display: flex; flex: 1; min-height: 0; }
.rail { display: flex; flex-direction: column; align-items: center; width: 74px; flex: none; padding-top: 9px; color: #69707f; }
.defs { position: absolute; }
.group { position: relative; display: flex; flex-direction: column; align-items: center; width: 56px; height: 226px; }
.group.custom { margin-top: 34px; color: #5f6676; }
.dash { position: absolute; inset: 0; width: 56px; height: 226px; }
.dash rect { width: 54px; height: 224px; fill: none; stroke: #2d9bf0; stroke-width: 2; stroke-dasharray: 6 3; }
.custom .dash rect { stroke: #69707f; }
.group h2 { position: relative; margin: -9px 0 12px; background: #fff; font: inherit; color: #459ae8; }
.group.custom h2 { color: #69707f; }
.group button, .favorites { position: relative; display: flex; flex: none; flex-direction: column; align-items: center; gap: 4px; height: 70px; }
.group button.active { color: #2f9bf5; }
.favorites { margin-top: 23px; gap: 3px; }

.tree { flex: 1; min-width: 0; overflow: hidden; padding-right: 2px; background: linear-gradient(90deg, #dae3f3 0, #edf1f7 10px, #f7f7f7 28px); }
.tree ul { margin: -18px 0 0; padding: 0; list-style: none; }
.tree li { height: 24px; overflow: hidden; }
.tree button { display: flex; align-items: center; gap: 6px; height: 24px; white-space: nowrap; }
.tree button.pdf, .tree button.pcb { gap: 4px; border-left: 2px solid transparent; }
.tree .active { color: #5396ff; }
.l0 { padding-left: 41px; }
.l1 { padding-left: 61px; }
.l2 { padding-left: 81px; }
.l3 { padding-left: 101px; }
.divider { width: 9px; background: #666; }
.scroll { display: flex; flex-direction: column; align-items: center; width: 13px; padding-top: 6px; background: #f0f0f0; }
.thumb { width: 9px; height: 49px; margin-top: 153px; border-radius: 5px; background: #646464; }

.gutter { position: relative; width: 10px; flex: none; background: #fbfffb; border-right: 1px solid #d8d8d8; }
.handle { position: absolute; left: 0; }
.handle.left { top: 338px; }
.handle.right { top: 326px; }

.viewer { display: flex; flex-direction: column; flex: 1; min-width: 0; }
.tabs { display: flex; align-items: center; gap: 5px; height: 34px; flex: none; padding: 0 11px 0 8px; background: #fafafa; border-bottom: 1px solid #d8d8d8; }
.tab { display: flex; align-items: center; justify-content: center; gap: 4px; width: 139px; height: 24px; border: 1px solid #777; border-radius: 4px; color: #888; white-space: nowrap; }
.tab.current { width: 212px; border-color: #000; color: #000; font-weight: 700; }
.close-all { margin-left: auto; }
.view-row { display: flex; flex: 1; min-height: 0; }
.view-main { display: flex; flex-direction: column; flex: 1; min-width: 0; }
.toolbar { display: flex; align-items: center; gap: 2px; height: 26px; flex: none; padding: 0 6px 0 5px; background: #fafafa; }
.toolbar button { display: grid; place-items: center; min-width: 24px; height: 24px; }
.toolbar .on { background: #b5d0fb; }
.sep { width: 1px; height: 20px; margin: 0 1px; background: #c4c4c4; }
.toolbar .scheme { width: 109px; height: 22px; border: 1px solid #e81010; }
.toolbar .panel-toggle { margin-left: auto; }
.canvas { flex: 1; width: 100%; min-height: 0; overflow: hidden; background: #fff; }
.canvas text { font: 18px "Open Sans", sans-serif; font-weight: 300; fill: #b4b0a2; }
.canvas .faint { opacity: .3; }
.side { position: relative; width: 10px; flex: none; border-left: 1px solid #d8d8d8; background: #fafafa; }

.status { height: 20px; flex: none; background: #0092db; color: #fff; text-align: center; font: 15px/20px "DejaVu Sans Mono", monospace; }
</style>
